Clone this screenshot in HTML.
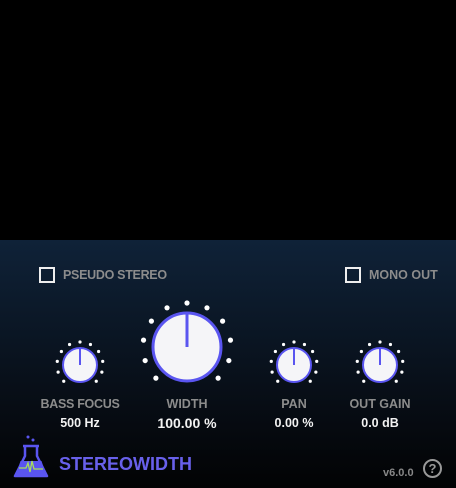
<!DOCTYPE html><html><head><style>
body{margin:0;width:456px;height:488px;background:#000;overflow:hidden;font-family:"Liberation Sans",sans-serif;font-weight:bold;position:relative}
.p{position:absolute;left:0;top:240px;width:456px;height:248px;background:linear-gradient(#0f2238,#060a10 75%,#020304)}
.t{position:absolute;white-space:nowrap;transform:translateX(-50%)}
.l{color:#8c8c8c;font-size:12.5px}
.v{color:#f2f2f2;font-size:12.5px}
.cb{position:absolute;width:12px;height:12px;border:2px solid #eee}
</style></head><body>
<div class="p"></div>
<div class="cb" style="left:39px;top:267px"></div>
<div class="t l" style="top:268px;transform:none;left:63px;letter-spacing:-0.3px">PSEUDO STEREO</div>
<div class="cb" style="left:345px;top:267px"></div>
<div class="t l" style="left:369px;top:268px;transform:none">MONO OUT</div>
<svg width="456" height="488" style="position:absolute;left:0;top:0">
<g fill="#fff" id="dots"></g>
<g id="k"></g>
</svg>
<div class="t l" style="left:80px;top:397px;letter-spacing:-0.3px">BASS FOCUS</div>
<div class="t v" style="left:80px;top:416px">500 Hz</div>
<div class="t l" style="left:187px;top:397px">WIDTH</div>
<div class="t v" style="left:187px;top:415px;font-size:14px">100.00 %</div>
<div class="t l" style="left:294px;top:397px">PAN</div>
<div class="t v" style="left:294px;top:416px">0.00 %</div>
<div class="t l" style="left:380px;top:397px">OUT GAIN</div>
<div class="t v" style="left:380px;top:416px">0.0 dB</div>
<svg width="36" height="44" style="position:absolute;left:13px;top:435px" viewBox="0 0 36 44">
<circle cx="15" cy="2" r="1.5" fill="#5a55f0"/><circle cx="20" cy="5" r="1.5" fill="#5a55f0"/>
<path d="M10 11h16M12 11v10L2 41h32L24 21V11" fill="none" stroke="#5a55f0" stroke-width="2.5" stroke-linejoin="round"/>
<path d="M7.5 26h21L33 40H3z" fill="#5a55f0"/>
<path d="M6 33h7l2-5 2 9 2-11 2 8h9" fill="none" stroke="#a8e05a" stroke-width="1.3"/>
</svg>
<div style="position:absolute;left:59px;top:454px;color:#6860ea;font-size:18px">STEREOWIDTH</div>
<div style="position:absolute;left:383px;top:467px;color:#888;font-size:11px">v6.0.0</div>
<div style="position:absolute;left:423px;top:459px;width:15px;height:15px;border:2px solid #999;border-radius:50%;color:#999;font-size:13px;text-align:center;line-height:15px">?</div>
<script>
var k=[[80,365,17,23,2],[187,347,34,44,3],[294,365,17,23,2],[380,365,17,23,2]],s='',d='';
k.forEach(function(a){for(var i=-5;i<=5;i++){var t=i*27*Math.PI/180;d+='<circle cx="'+(a[0]+a[3]*Math.sin(t))+'" cy="'+(a[1]-a[3]*Math.cos(t))+'" r="'+(a[4]==3?2.6:1.6)+'"/>';}
s+='<circle cx="'+a[0]+'" cy="'+a[1]+'" r="'+a[2]+'" fill="#f5f5f8" stroke="#5a55f0" stroke-width="'+a[4]+'"/><line x1="'+a[0]+'" y1="'+a[1]+'" x2="'+a[0]+'" y2="'+(a[1]-a[2])+'" stroke="#5a55f0" stroke-width="'+a[4]+'"/>';});
document.getElementById('dots').innerHTML=d;document.getElementById('k').innerHTML=s;
</script>
</body></html>
